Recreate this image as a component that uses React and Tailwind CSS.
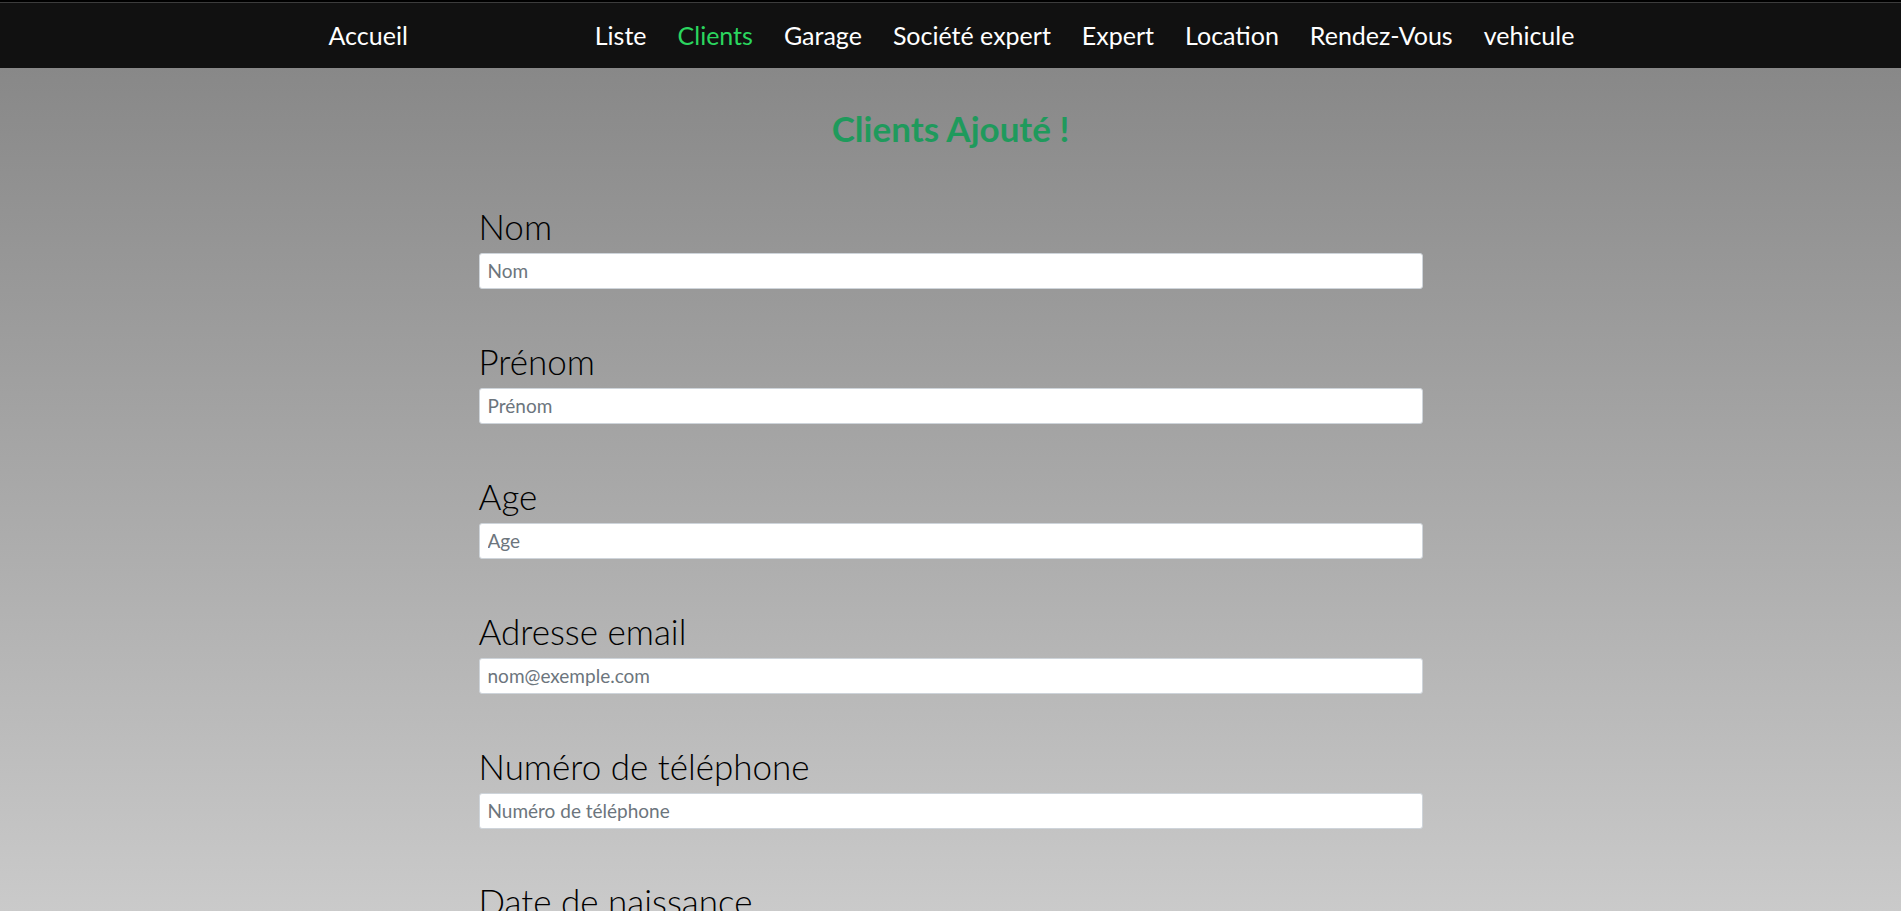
import React from "react";

const links = ["Liste", "Clients", "Garage", "Société expert", "Expert", "Location", "Rendez-Vous", "vehicule"];

const fields = [
  { label: "Nom", placeholder: "Nom", type: "text" },
  { label: "Prénom", placeholder: "Prénom", type: "text" },
  { label: "Age", placeholder: "Age", type: "text" },
  { label: "Adresse email", placeholder: "nom@exemple.com", type: "email" },
  { label: "Numéro de téléphone", placeholder: "Numéro de téléphone", type: "text" },
  { label: "Date de naissance", placeholder: "Date de naissance", type: "text" },
];

export default function App() {
  return (
    <div
      className="min-h-screen bg-fixed bg-gradient-to-b from-[#838383] to-[#cacaca]"
      style={{ fontFamily: "Lato, 'Open Sans', sans-serif" }}
    >
      {/* barre de navigation */}
      <div className="h-[2px] bg-black" />
      <nav className="h-[66px] bg-[#111111] border-t border-[#3c3c3c]">
        <div className="w-[1244px] mx-auto h-full flex items-center text-[25px] text-white whitespace-nowrap">
          <a className="cursor-pointer shrink-0">Accueil</a>
          <ul className="flex shrink-0 gap-[31px] ml-[187px]">
            {links.map((l) => (
              <li key={l} className={l === "Clients" ? "shrink-0 text-[#2bd65f]" : "shrink-0 text-white"}>
                {l}
              </li>
            ))}
          </ul>
        </div>
      </nav>

      <h1 className="text-center text-[#1f9a5c] font-bold text-[35px] mt-[34px]">Clients Ajouté !</h1>

      <form className="w-[944px] mx-auto mt-[51px] pb-16">
        {fields.map((f) => (
          <div key={f.label} className="mb-[52px]">
            <label className="block text-[35px] font-light text-black leading-[40px] mb-[7px]">{f.label}</label>
            <input
              type={f.type}
              placeholder={f.placeholder}
              className="w-full h-[36px] bg-white border border-[#ced4da] rounded-[3px] px-[8px] text-[19px] placeholder:text-[#6c757d] outline-none"
            />
          </div>
        ))}
      </form>
    </div>
  );
}
